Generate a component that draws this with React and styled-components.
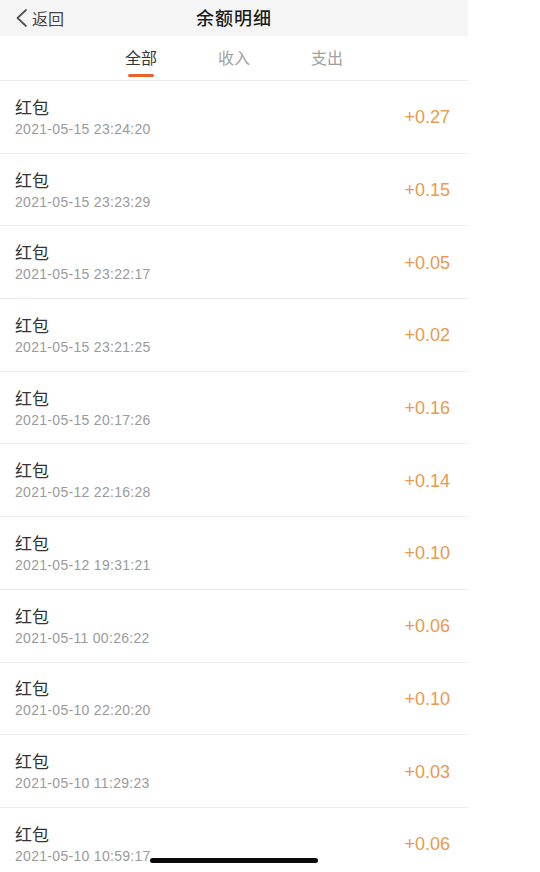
import React from "react";
import styled, { createGlobalStyle } from "styled-components";

const Global = createGlobalStyle`
  html, body { margin: 0; padding: 0; background: #fff; }
  body { font-family: "Liberation Sans", "Noto Sans CJK SC", sans-serif; }
  * { box-sizing: border-box; }
`;

const Page = styled.div`
  width: 540px;
  height: 872px;
  position: relative;
  overflow: hidden;
  background: #fff;
`;

const Phone = styled.div`
  width: 468px;
  display: flex;
  flex-direction: column;
`;

const NavBar = styled.div`
  height: 36px;
  background: #f5f5f5;
  display: grid;
  grid-template-columns: 1fr auto 1fr;
  align-items: center;
`;

const Back = styled.div`
  display: flex;
  align-items: center;
  gap: 2px;
  padding-left: 14px;
  color: #444;
  font-size: 16px;
  font-family: "Noto Sans CJK SC", sans-serif;
  line-height: 20px;
`;

const Title = styled.div`
  font-family: "Noto Sans CJK SC", sans-serif;
  font-size: 18px;
  font-weight: 500;
  color: #1c1c1c;
  line-height: 22px;
  margin-top: -3px;
  letter-spacing: 1px;
`;

const Tabs = styled.div`
  height: 45px;
  display: flex;
  justify-content: center;
  gap: 60px;
  border-bottom: 1px solid #ebebeb;
`;

const Tab = styled.div`
  width: 33px;
  display: flex;
  flex-direction: column;
  align-items: center;
  padding-top: 10px;
  font-family: "Noto Sans CJK SC", sans-serif;
  font-size: 16px;
  line-height: 22px;
  color: ${(p) => (p.$active ? "#333" : "#a0a0a0")};
`;

const Underline = styled.div`
  width: 26px;
  height: 3px;
  border-radius: 2px;
  background: #e8632c;
  margin-top: 6px;
`;

const Row = styled.div`
  height: 72.7px;
  display: flex;
  align-items: center;
  justify-content: space-between;
  padding: 0 18px 0 15px;
  border-bottom: 1px solid #ededed;
`;

const Left = styled.div`
  display: flex;
  flex-direction: column;
  gap: 2px;
`;

const Name = styled.div`
  font-family: "Noto Sans CJK SC", sans-serif;
  font-size: 17px;
  line-height: 22px;
  color: #333;
`;

const Time = styled.div`
  font-family: "Liberation Sans", sans-serif;
  font-size: 14px;
  line-height: 18px;
  color: #9a9a9a;
  letter-spacing: 0.3px;
`;

const Amount = styled.div`
  font-family: "Liberation Sans", sans-serif;
  font-size: 18px;
  line-height: 22px;
  color: #e99a4d;
  margin-top: 1px;
`;

const HomeBar = styled.div`
  position: absolute;
  left: 150px;
  bottom: 9px;
  width: 168px;
  height: 5px;
  border-radius: 3px;
  background: #0a0a0a;
`;

const items = [
  ["2021-05-15 23:24:20", "+0.27"],
  ["2021-05-15 23:23:29", "+0.15"],
  ["2021-05-15 23:22:17", "+0.05"],
  ["2021-05-15 23:21:25", "+0.02"],
  ["2021-05-15 20:17:26", "+0.16"],
  ["2021-05-12 22:16:28", "+0.14"],
  ["2021-05-12 19:31:21", "+0.10"],
  ["2021-05-11 00:26:22", "+0.06"],
  ["2021-05-10 22:20:20", "+0.10"],
  ["2021-05-10 11:29:23", "+0.03"],
  ["2021-05-10 10:59:17", "+0.06"],
];

export default function App() {
  return (
    <Page>
      <Global />
      <Phone>
        <NavBar>
          <Back>
            <svg width="16" height="20" viewBox="0 0 16 20">
              <path d="M12 2 L3.5 10 L12 18" fill="none" stroke="#555" strokeWidth="1.8" strokeLinecap="round" strokeLinejoin="round" />
            </svg>
            <span>返回</span>
          </Back>
          <Title>余额明细</Title>
          <div />
        </NavBar>
        <Tabs>
          <Tab $active>
            全部
            <Underline />
          </Tab>
          <Tab>收入</Tab>
          <Tab>支出</Tab>
        </Tabs>
        {items.map(([t, a], i) => (
          <Row key={i}>
            <Left>
              <Name>红包</Name>
              <Time>{t}</Time>
            </Left>
            <Amount>{a}</Amount>
          </Row>
        ))}
      </Phone>
      <HomeBar />
    </Page>
  );
}
